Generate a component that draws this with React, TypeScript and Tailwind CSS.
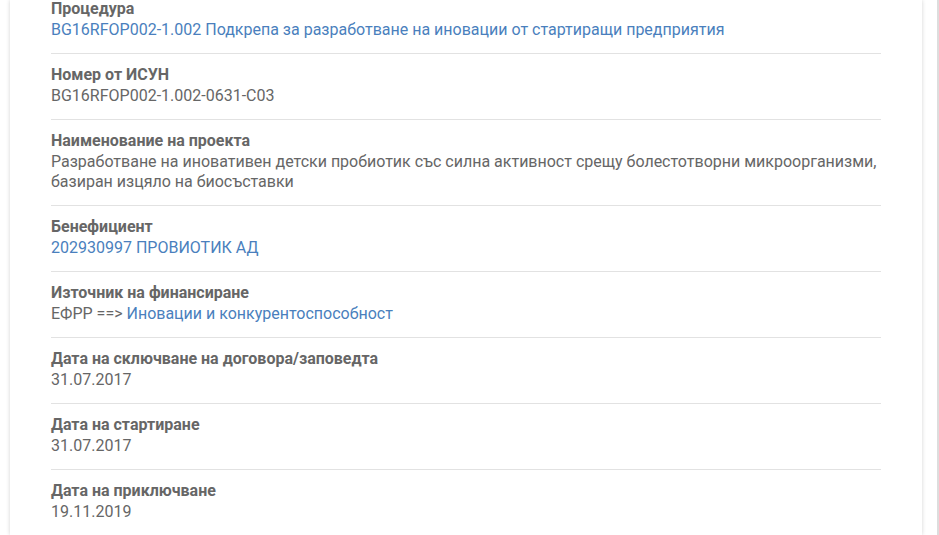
const items: { label: string; value: React.ReactNode }[] = [
  {
    label: "Процедура",
    value: (
      <a className="text-[#4a7fbd]" href="#">
        BG16RFOP002-1.002 Подкрепа за разработване на иновации от стартиращи предприятия
      </a>
    ),
  },
  { label: "Номер от ИСУН", value: "BG16RFOP002-1.002-0631-C03" },
  {
    label: "Наименование на проекта",
    value:
      "Разработване на иновативен детски пробиотик със силна активност срещу болестотворни микроорганизми, базиран изцяло на биосъставки",
  },
  {
    label: "Бенефициент",
    value: (
      <a className="text-[#4a7fbd]" href="#">
        202930997 ПРОВИОТИК АД
      </a>
    ),
  },
  {
    label: "Източник на финансиране",
    value: (
      <>
        ЕФРР ==&gt;{" "}
        <a className="text-[#4a7fbd]" href="#">
          Иновации и конкурентоспособност
        </a>
      </>
    ),
  },
  { label: "Дата на сключване на договора/заповедта", value: "31.07.2017" },
  { label: "Дата на стартиране", value: "31.07.2017" },
  { label: "Дата на приключване", value: "19.11.2019" },
];

export default function App() {
  return (
    <div className="h-[535px] overflow-hidden bg-white font-['Roboto',sans-serif] text-[16px]">
      <div className="flex h-full">
        <div className="ml-[10px] w-[912px] bg-white px-[41px] shadow-[0_0_4px_rgba(0,0,0,0.18)]">
          <div className="-mt-[12px]">
            {items.map((it, i) => (
              <div
                key={i}
                className={`pt-[10px] pb-[13px] ${i < items.length - 1 ? "border-b border-[#e2e2e2]" : ""}`}
              >
                <div className="font-bold leading-[22px] text-[#666666]">{it.label}</div>
                <div className="leading-[20px] text-[#666666]">{it.value}</div>
              </div>
            ))}
          </div>
        </div>
        <div className="flex-1" />
        <div className="w-[2px] bg-[#dddddd]" />
      </div>
    </div>
  );
}
